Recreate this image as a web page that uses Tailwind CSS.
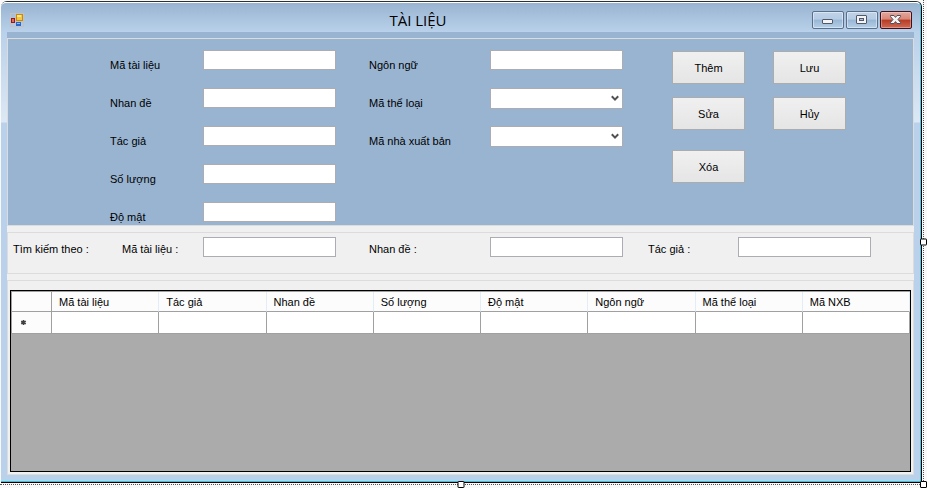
<!DOCTYPE html>
<html lang="vi">
<head>
<meta charset="utf-8">
<title>TÀI LIỆU</title>
<script src="https://cdn.jsdelivr.net/npm/@tailwindcss/browser@4"></script>
</head>
<body class="bg-[#f9f9f9]">
<div class="relative flex min-h-screen pt-px pr-[5px] pb-[5px] pl-px font-['Liberation_Sans',sans-serif] text-[11px] leading-4 text-black">
  <!-- Designer selection outline -->
  <div class="pointer-events-none absolute top-0 right-[3px] bottom-[3px] left-0 border-r border-b border-dotted border-[#555]"></div>

  <main class="flex flex-1 flex-col rounded-t-[6px] border-t border-r border-b border-t-[#2c332f] border-r-black border-b-black">
    <div class="flex flex-1 flex-col rounded-t-[5px] border-t border-r border-b border-t-white border-r-[#45c8e8] border-b-[#38c4d8] bg-[linear-gradient(to_bottom,#99b4d1_0px,#b9d1ea_29px,#dce8f5_119px,#b9d1ea_120px)] pr-1.5 pb-1.5 pl-1.5">
      <header class="flex h-[29px] items-start">
        <svg class="mt-2.5 ml-[3px] size-[14px]" viewBox="0 0 14 14" shape-rendering="crispEdges" aria-hidden="true">
          <path d="M0 0H14V14H0ZM1 1V13H13V1Z" fill="#c2c2c2" fill-rule="evenodd"/>
          <rect x="5" y="0" width="9" height="9" fill="#c2c2c2"/>
          <rect x="6" y="1" width="7" height="7" fill="#c98a08"/>
          <rect x="7" y="2" width="5" height="5" fill="#f5c842"/>
          <rect x="7" y="2" width="4" height="2" fill="#ffe79a"/>
          <rect x="1" y="5" width="4" height="5" fill="#9c1710"/>
          <rect x="2" y="6" width="2" height="3" fill="#e0695c"/>
          <rect x="6" y="9" width="5" height="4" fill="#2a66c8"/>
          <rect x="7" y="10" width="3" height="1" fill="#8fbcf5"/>
        </svg>
        <h1 class="flex-1 pt-[7px] text-center font-['Open_Sans',sans-serif] text-[15px] leading-5">TÀI LIỆU</h1>
        <div class="flex gap-0.5 pt-2 pr-0.5">
          <button type="button" aria-label="Thu nhỏ" class="flex h-[18px] w-8 items-center justify-center rounded-[2px] border border-[#596f8c] bg-[linear-gradient(#bfd2e7_0%,#b4cce4_45%,#98b6d4_50%,#b4cfe8_100%)] shadow-[inset_0_0_0_1px_#ffffff70]">
            <svg class="h-[10px] w-[12px]" viewBox="0 0 12 10" aria-hidden="true"><rect x="0.500" y="4.500" width="10" height="4" rx="0.5" fill="#f4f4f4" stroke="#50586a"/></svg>
          </button>
          <button type="button" aria-label="Phóng to" class="flex h-[18px] w-8 items-center justify-center rounded-[2px] border border-[#596f8c] bg-[linear-gradient(#bfd2e7_0%,#b4cce4_45%,#98b6d4_50%,#b4cfe8_100%)] shadow-[inset_0_0_0_1px_#ffffff70]">
            <svg class="h-[10px] w-[12px]" viewBox="0 0 12 10" aria-hidden="true"><rect x="0.500" y="0.5" width="10" height="8" rx="0.5" fill="#f4f4f4" stroke="#50586a"/><rect x="3.500" y="3.500" width="4" height="2" fill="#a9c3df" stroke="#50586a"/></svg>
          </button>
          <button type="button" aria-label="Đóng" class="flex h-[18px] w-8 items-center justify-center rounded-[2px] border border-[#42101c] bg-[linear-gradient(#e5a79c_0%,#d98778_45%,#b83a22_50%,#cf6a55_100%)] shadow-[inset_0_0_0_1px_#ffffff50]">
            <svg class="h-[10px] w-[12px]" viewBox="0 0 12 10" aria-hidden="true"><path d="M.5 .5H4L5.500 2.400 7 .5H10.500V1.600L8 4.500 10.500 7.400V8.500H7L5.500 6.600 4 8.500H.5V7.400L3 4.500 .5 1.600Z" fill="#f4f4f4" stroke="#50505c"/></svg>
          </button>
        </div>
      </header>

      <div class="flex flex-1 flex-col bg-[#f0f0f0]">
        <section class="bg-[#99b4d1] pt-1.5" aria-label="Thông tin tài liệu">
          <div class="flex h-[188px] items-start border border-[#dcdcdc] pt-[11px] pl-[102px]">
            <div class="grid auto-rows-[38px] grid-cols-[93px_133px] items-start">
              <label for="ma" class="pt-[7px]">Mã tài liệu</label><input id="ma" class="h-5 w-full border border-[#abadb3] bg-white px-1">
              <label for="nhan" class="pt-[7px]">Nhan đề</label><input id="nhan" class="h-5 w-full border border-[#abadb3] bg-white px-1">
              <label for="tg" class="pt-[7px]">Tác giả</label><input id="tg" class="h-5 w-full border border-[#abadb3] bg-white px-1">
              <label for="sl" class="pt-[7px]">Số lượng</label><input id="sl" class="h-5 w-full border border-[#abadb3] bg-white px-1">
              <label for="mat" class="pt-[7px]">Độ mật</label><input id="mat" class="h-5 w-full border border-[#abadb3] bg-white px-1">
            </div>
            <div class="ml-[33px] grid auto-rows-[38px] grid-cols-[121px_133px] items-start">
              <label for="nn" class="pt-[7px]">Ngôn ngữ</label><input id="nn" class="h-5 w-full border border-[#abadb3] bg-white px-1">
              <label for="tl" class="pt-[7px]">Mã thể loại</label>
              <div class="relative">
                <select id="tl" class="block h-[21px] w-full appearance-none border border-[#abadb3] bg-white"></select>
                <svg class="pointer-events-none absolute top-[7px] right-1 h-[7px] w-2" viewBox="0 0 8 7" aria-hidden="true"><path d="M.8 1.200 4 4.600 7.200 1.200" fill="none" stroke="#505050" stroke-width="2"/></svg>
              </div>
              <label for="nxb" class="pt-[7px]">Mã nhà xuất bản</label>
              <div class="relative">
                <select id="nxb" class="block h-[21px] w-full appearance-none border border-[#abadb3] bg-white"></select>
                <svg class="pointer-events-none absolute top-[7px] right-1 h-[7px] w-2" viewBox="0 0 8 7" aria-hidden="true"><path d="M.8 1.200 4 4.600 7.200 1.200" fill="none" stroke="#505050" stroke-width="2"/></svg>
              </div>
            </div>
            <div class="ml-[49px] grid grid-cols-[73px_73px] gap-x-7 pt-px">
              <button type="button" class="mb-[13px] h-[33px] border border-[#acacac] bg-linear-to-b from-[#f0f0f0] to-[#e5e5e5]">Thêm</button>
              <button type="button" class="mb-[13px] h-[33px] border border-[#acacac] bg-linear-to-b from-[#f0f0f0] to-[#e5e5e5]">Lưu</button>
              <button type="button" class="mb-5 h-[33px] border border-[#acacac] bg-linear-to-b from-[#f0f0f0] to-[#e5e5e5]">Sửa</button>
              <button type="button" class="mb-5 h-[33px] border border-[#acacac] bg-linear-to-b from-[#f0f0f0] to-[#e5e5e5]">Hủy</button>
              <button type="button" class="h-[33px] border border-[#acacac] bg-linear-to-b from-[#f0f0f0] to-[#e5e5e5]">Xóa</button>
            </div>
          </div>
        </section>

        <section class="mt-1.5 flex h-[42px] items-start border border-[#dcdcdc] pt-1 pl-[5px]" aria-label="Tìm kiếm">
          <span class="w-[109px] pt-1">Tìm kiếm theo :</span>
          <label for="s1" class="w-[81px] pt-1">Mã tài liệu :</label><input id="s1" class="h-5 w-[133px] border border-[#abadb3] bg-white px-1">
          <label for="s2" class="ml-[33px] w-[121px] pt-1">Nhan đề :</label><input id="s2" class="h-5 w-[133px] border border-[#abadb3] bg-white px-1">
          <label for="s3" class="ml-[25px] w-[90px] pt-1">Tác giả :</label><input id="s3" class="h-5 w-[133px] border border-[#abadb3] bg-white px-1">
        </section>

        <section class="mt-1.5 flex flex-1 flex-col border border-[#dcdcdc] px-0.5 pt-[9px] pb-0.5" aria-label="Danh sách tài liệu">
          <div class="flex-1 border border-black bg-[#ababab]">
            <table class="w-full table-fixed border-separate border-spacing-0 border-t border-l border-[#a0a0a0] text-left">
              <thead>
                <tr class="h-5 bg-[#fcfcfc]">
                  <th class="w-10 border-r border-b border-[#a0a0a0] p-0" aria-label="Hàng"></th>
                  <th class="border-r border-b border-r-[#e3edf8] border-b-[#a0a0a0] p-0 pl-[7px] font-normal">Mã tài liệu</th>
                  <th class="border-r border-b border-r-[#e3edf8] border-b-[#a0a0a0] p-0 pl-[7px] font-normal">Tác giả</th>
                  <th class="border-r border-b border-r-[#e3edf8] border-b-[#a0a0a0] p-0 pl-[7px] font-normal">Nhan đề</th>
                  <th class="border-r border-b border-r-[#e3edf8] border-b-[#a0a0a0] p-0 pl-[7px] font-normal">Số lượng</th>
                  <th class="border-r border-b border-r-[#e3edf8] border-b-[#a0a0a0] p-0 pl-[7px] font-normal">Độ mật</th>
                  <th class="border-r border-b border-r-[#e3edf8] border-b-[#a0a0a0] p-0 pl-[7px] font-normal">Ngôn ngữ</th>
                  <th class="border-r border-b border-r-[#e3edf8] border-b-[#a0a0a0] p-0 pl-[7px] font-normal">Mã thể loại</th>
                  <th class="border-r border-b border-r-[#e3edf8] border-b-[#a0a0a0] p-0 pl-[7px] font-normal">Mã NXB</th>
                </tr>
              </thead>
              <tbody>
                <tr class="h-[22px] bg-white">
                  <th class="border-r border-b border-[#a0a0a0] bg-[#fcfcfc] p-0 pl-2" aria-label="Hàng mới">
                    <svg class="size-[7px]" viewBox="0 0 7 7" aria-hidden="true"><path d="M3.500 1V6M1.200 2.300 5.800 4.700M5.800 2.300 1.200 4.700" stroke="#404040" stroke-width="1.600"/></svg>
                  </th>
                  <td class="border-r border-b border-[#a0a0a0] p-0"></td>
                  <td class="border-r border-b border-[#a0a0a0] p-0"></td>
                  <td class="border-r border-b border-[#a0a0a0] p-0"></td>
                  <td class="border-r border-b border-[#a0a0a0] p-0"></td>
                  <td class="border-r border-b border-[#a0a0a0] p-0"></td>
                  <td class="border-r border-b border-[#a0a0a0] p-0"></td>
                  <td class="border-r border-b border-[#a0a0a0] p-0"></td>
                  <td class="border-r border-b border-[#a0a0a0] p-0"></td>
                </tr>
              </tbody>
            </table>
          </div>
        </section>
      </div>
    </div>
  </main>

  <!-- Resize handles, centred on the window's edges -->
  <div class="pointer-events-none absolute inset-0 right-1.5 bottom-1">
    <div class="absolute top-1/2 -right-1.5 size-[7px] -translate-y-1/2 rounded-[1px] border border-black bg-white"></div>
    <div class="absolute -bottom-1 left-1/2 size-[7px] -translate-x-1/2 rounded-[1px] border border-black bg-white"></div>
    <div class="absolute -right-1.5 -bottom-1 size-[7px] rounded-[1px] border border-black bg-white"></div>
  </div>
</div>
</body>
</html>
